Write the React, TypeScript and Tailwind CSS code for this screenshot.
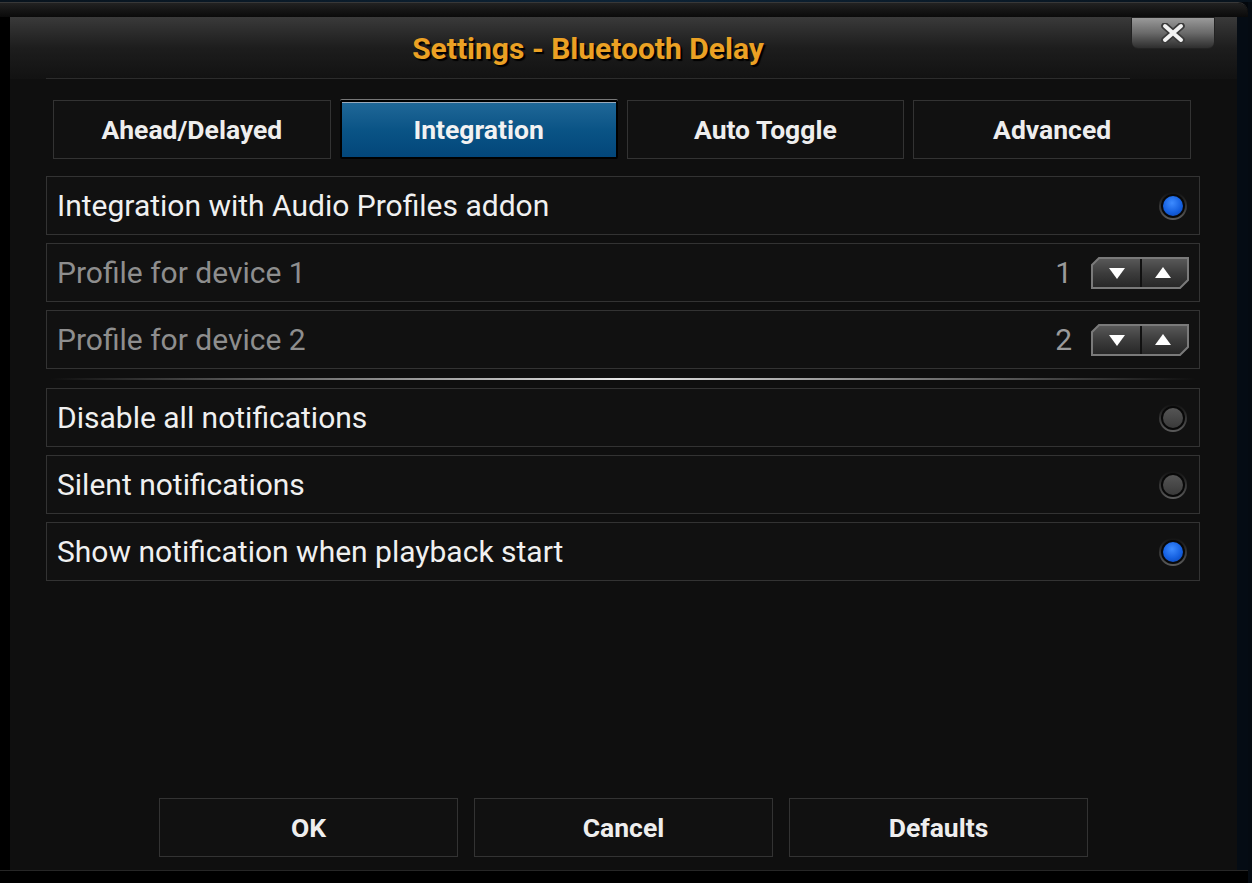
import React from "react";

const tabs = ["Ahead/Delayed", "Integration", "Auto Toggle", "Advanced"];

const Radio = ({ on }: { on: boolean }) => (
  <div className="w-[28px] h-[28px] rounded-full bg-gradient-to-b from-[#121212] to-[#5c5c5c] flex items-center justify-center">
    <div className="w-[24px] h-[24px] rounded-full bg-[#080808] flex items-center justify-center">
      {on ? (
        <div className="w-[20px] h-[20px] rounded-full bg-[radial-gradient(circle_at_45%_35%,#3d8bff,#1560e0_55%,#0a3fa8)]" />
      ) : (
        <div className="w-[20px] h-[20px] rounded-full bg-gradient-to-b from-[#555] to-[#3a3a3a]" />
      )}
    </div>
  </div>
);

const Spinner = () => (
  <svg width="98" height="32" viewBox="0 0 98 32">
    <defs>
      <linearGradient id="spg" x1="0" y1="0" x2="0" y2="1">
        <stop offset="0" stopColor="#5a5a5a" />
        <stop offset="0.5" stopColor="#3c3c3c" />
        <stop offset="1" stopColor="#262626" />
      </linearGradient>
    </defs>
    <path
      d="M8 1 H97 V23 L89 31 H1 V8 Z"
      fill="url(#spg)"
      stroke="#7a7a7a"
      strokeWidth="2"
    />
    <line x1="50" y1="2" x2="50" y2="30" stroke="#111" strokeWidth="2" />
    <path d="M18 11 H34 L26 22 Z" fill="#fff" />
    <path d="M64 21 H80 L72 10 Z" fill="#fff" />
  </svg>
);

const rows = [
  { label: "Integration with Audio Profiles addon", kind: "radio", on: true },
  { label: "Profile for device 1", kind: "spin", value: "1" },
  { label: "Profile for device 2", kind: "spin", value: "2" },
];

const rows2 = [
  { label: "Disable all notifications", on: false },
  { label: "Silent notifications", on: false },
  { label: "Show notification when playback start", on: true },
];

const App = () => {
  return (
    <div
      className="w-[1252px] h-[883px] bg-[#03070c] overflow-hidden flex flex-col"
      style={{ fontFamily: "Roboto, 'Noto Sans', sans-serif" }}
    >
      <div className="h-[2px] bg-gradient-to-r from-[#08131d] via-[#0d2336] to-[#08131d]" />
      <div className="flex-1 flex">
        <div className="w-[1248px] flex flex-col rounded-tr-[10px] bg-black border-t border-[#383838]">
          <div className="h-[14px] rounded-tr-[10px] bg-gradient-to-b from-[#222] to-[#0a0a0a]" />
          <div className="flex">
            <div className="w-[10px] bg-black" />
            <div className="w-[1227px] h-[853px] bg-[#0f0f0f] flex flex-col">
              {/* header */}
              <div className="h-[62px] flex bg-gradient-to-b from-[#3a3a3a] via-[#1d1d1d] to-[#121212]">
                <div className="w-[36px]" />
                <div className="w-[1084px] flex flex-col">
                  <div className="flex-1 flex items-center justify-center pt-[2px]">
                    <span className="text-[30px] font-bold text-[#eba124] [text-shadow:2px_2px_1px_#000]">
                      Settings - Bluetooth Delay
                    </span>
                  </div>
                  <div className="h-px bg-[#2c2c2c]" />
                </div>
                <div className="ml-px w-[84px] h-[32px] rounded-b-[7px] border border-[#222] bg-gradient-to-b from-[#9a9a9a] via-[#6a6a6a] to-[#2e2e2e] flex items-center justify-center">
                  <svg width="28" height="20" viewBox="0 0 28 20">
                    <path d="M6 3 L22 17 M22 3 L6 17" stroke="#3a3a3a" strokeWidth="7.5" strokeLinecap="round" />
                    <path d="M6 3 L22 17 M22 3 L6 17" stroke="#f2f2f2" strokeWidth="4" strokeLinecap="round" />
                  </svg>
                </div>
              </div>

              {/* tabs */}
              <div className="mt-[21px] ml-[43px] w-[1138px] grid grid-cols-4 gap-[9px]">
                {tabs.map((t) =>
                  t === "Integration" ? (
                    <div
                      key={t}
                      className="h-[59px] border-2 border-black rounded-[2px] bg-gradient-to-b from-[#1f6898] via-[#0a5486] to-[#03467a] shadow-[inset_0_1px_0_#9ab,0_-1px_0_#777] flex items-center justify-center text-[26.5px] font-bold text-[#f2f2f2]"
                    >
                      {t}
                    </div>
                  ) : (
                    <div
                      key={t}
                      className="h-[59px] border border-[#333] bg-[#111] flex items-center justify-center text-[26.5px] font-bold text-[#eeeeee]"
                    >
                      {t}
                    </div>
                  )
                )}
              </div>

              {/* settings list */}
              <div className="mt-[17px] ml-[36px] w-[1154px] flex flex-col gap-[8px]">
                {rows.map((r) => (
                  <div
                    key={r.label}
                    className="h-[59px] border border-[#333] bg-[#111] flex items-center pl-[10px] pr-[12px]"
                  >
                    <span
                      className={
                        "text-[30px] flex-1 " +
                        (r.kind === "radio" ? "text-[#f0f0f0]" : "text-[#8e8e8e]")
                      }
                    >
                      {r.label}
                    </span>
                    {r.kind === "radio" ? (
                      <Radio on={!!r.on} />
                    ) : (
                      <div className="flex items-center gap-[19px] -mr-[2px]">
                        <span className="text-[30px] text-[#9a9a9a]">{r.value}</span>
                        <Spinner />
                      </div>
                    )}
                  </div>
                ))}
              </div>

              <div className="mt-[9px] mb-[8px] ml-[40px] w-[1146px] h-[2px] bg-gradient-to-r from-transparent via-[#e8e8e8] to-transparent" />

              <div className="ml-[36px] w-[1154px] flex flex-col gap-[8px]">
                {rows2.map((r) => (
                  <div
                    key={r.label}
                    className="h-[59px] border border-[#333] bg-[#111] flex items-center pl-[10px] pr-[12px]"
                  >
                    <span className="text-[30px] flex-1 text-[#f0f0f0]">{r.label}</span>
                    <Radio on={r.on} />
                  </div>
                ))}
              </div>

              {/* buttons */}
              <div className="mt-auto mb-[13px] flex justify-center gap-[16px]">
                {["OK", "Cancel", "Defaults"].map((b) => (
                  <div
                    key={b}
                    className="w-[299px] h-[59px] border border-[#333] bg-[#111] flex items-center justify-center text-[26.5px] font-bold text-[#eeeeee]"
                  >
                    {b}
                  </div>
                ))}
              </div>
            </div>
            <div className="flex-1 bg-[#050c14]" />
          </div>
          <div className="flex-1 bg-black border-t border-[#262626]" />
        </div>
        <div className="flex-1 bg-[#050b12]" />
      </div>
    </div>
  );
};

export default App;
